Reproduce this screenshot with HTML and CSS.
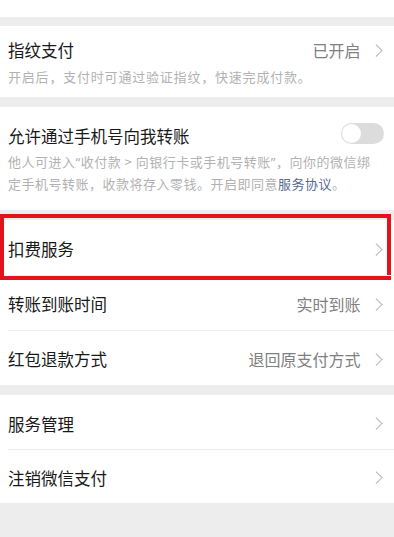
FILE: index.html
```html
<!DOCTYPE html>
<html lang="zh-CN">
<head>
  <meta charset="UTF-8" />
  <title>支付设置</title>
  <link rel="stylesheet" href="styles.css">
</head>
<body>
  <div class="top-strip"></div>

  <div class="group">
    <div class="item">
      <div class="item-head">
        <span class="title">指纹支付</span>
        <span class="value">已开启</span>
        <span class="arrow"></span>
      </div>
      <div class="desc">开启后，支付时可通过验证指纹，快速完成付款。</div>
    </div>
  </div>

  <div class="group">
    <div class="item item-switch">
      <div class="item-head">
        <span class="title">允许通过手机号向我转账</span>
        <span class="switch"></span>
      </div>
      <div class="desc">他人可进入<span class="latin">“</span>收付款 &gt; 向银行卡或手机号转账<span class="latin">”</span>，向你的微信绑<br>定手机号转账，收款将存入零钱。开启即同意<a class="link">服务协议</a>。</div>
    </div>
  </div>

  <div class="group">
    <div class="row marked">
      <span class="title">扣费服务</span>
      <span class="arrow"></span>
    </div>
    <div class="row">
      <span class="title">转账到账时间</span>
      <span class="value">实时到账</span>
      <span class="arrow"></span>
    </div>
    <div class="row">
      <span class="title">红包退款方式</span>
      <span class="value">退回原支付方式</span>
      <span class="arrow"></span>
    </div>
  </div>

  <div class="group">
    <div class="row">
      <span class="title">服务管理</span>
      <span class="arrow"></span>
    </div>
    <div class="row">
      <span class="title">注销微信支付</span>
      <span class="arrow"></span>
    </div>
  </div>
</body>
</html>
```

FILE: styles.css
```css
body {
  margin: 0;
  background: #ededed;
  font-family: "Noto Sans CJK SC", "Noto Sans", sans-serif;
  color: #191919;
}
.top-strip {
  height: 17px;
  background: #fff;
}
.group {
  background: #fff;
  margin-top: 9px;
}
.group + .group {
  margin-top: 10px;
}
.item {
  padding: 13px 11px 10px 8px;
}
.item-switch {
  padding-top: 18px;
  padding-bottom: 15px;
}
.item-head {
  display: flex;
  align-items: center;
  height: 22px;
}
.title {
  flex: 1;
  font-size: 16.5px;
  line-height: 22px;
}
.value {
  font-size: 16px;
  color: #808080;
  margin-right: 11px;
}
.arrow {
  width: 7.5px;
  height: 7.5px;
  border-top: 1.2px solid #b5b5b5;
  border-right: 1.2px solid #b5b5b5;
  transform: rotate(45deg);
  margin-right: 3px;
}
.desc {
  margin-top: 6px;
  font-size: 13px;
  line-height: 20px;
  letter-spacing: 0.8px;
  color: #b2b2b2;
  white-space: nowrap;
}
.item-switch .desc {
  margin-top: 4px;
  line-height: 22px;
  letter-spacing: 0.5px;
}
.latin {
  font-family: "Noto Sans", sans-serif;
}
.link {
  color: #576b95;
}
.switch {
  position: relative;
  width: 43px;
  height: 21px;
  border-radius: 11px;
  background: #dcdcdc;
  margin-top: -6px;
  margin-right: -1px;
}
.switch::after {
  content: "";
  position: absolute;
  left: 1px;
  top: 1px;
  width: 19px;
  height: 19px;
  border-radius: 50%;
  background: #fff;
}
.row {
  position: relative;
  display: flex;
  align-items: center;
  height: 55px;
  padding: 3px 11px 0 8px;
  box-sizing: border-box;
}
.row + .row::before {
  content: "";
  position: absolute;
  top: 0;
  left: 8px;
  right: 0;
  border-top: 1px solid #ececec;
}
.group:last-child .row {
  height: 54px;
}
.marked::after {
  content: "";
  position: absolute;
  top: -6px;
  bottom: -5px;
  left: 0;
  right: 3px;
  border: 4px solid #e2131d;
}
```
